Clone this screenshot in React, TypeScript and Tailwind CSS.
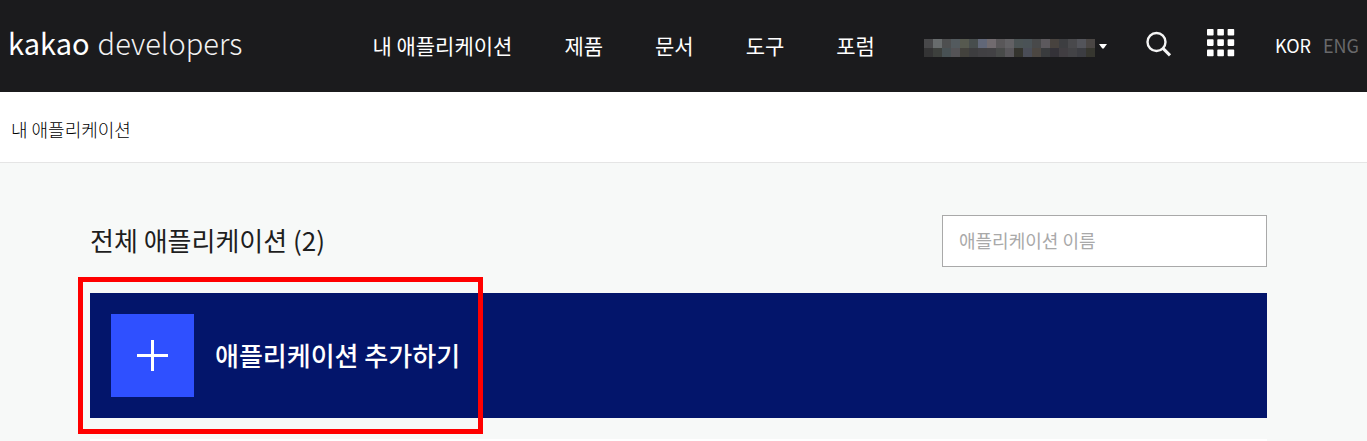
import clsx from 'clsx';

const NAV_ITEMS = ['내 애플리케이션', '제품', '문서', '도구', '포럼'];

// masked account name, two rows of blocks
const MASK_COLORS = [
  'bg-[#48484a]', 'bg-[#686c6d]', 'bg-[#4e4f50]', 'bg-[#535a5e]', 'bg-[#56594f]', 'bg-[#474d4d]', 'bg-[#616778]',
  'bg-[#716b6f]', 'bg-[#595759]', 'bg-[#626164]', 'bg-[#4b5354]', 'bg-[#4a5256]', 'bg-[#48494a]', 'bg-[#5c595d]',
  'bg-[#48433f]', 'bg-[#3d3e41]', 'bg-[#49494c]', 'bg-[#53545a]', 'bg-[#4a4644]',
  'bg-[#343435]', 'bg-[#3d403d]', 'bg-[#485154]', 'bg-[#545356]', 'bg-[#43423d]', 'bg-[#3d3d3f]', 'bg-[#414043]',
  'bg-[#424144]', 'bg-[#484a49]', 'bg-[#58565a]', 'bg-[#34342e]', 'bg-[#4a4d57]', 'bg-[#4c4742]', 'bg-[#393b3d]',
  'bg-[#343238]', 'bg-[#413e42]', 'bg-[#434346]', 'bg-[#3c3d42]', 'bg-[#36362f]',
];

function SearchIcon() {
  return (
    <svg width="26" height="26" viewBox="0 0 26 26" fill="none" stroke="#f5f5f5" strokeWidth="2.4" aria-hidden="true">
      <circle cx="10.5" cy="11" r="9" />
      <path d="M17 17.4L24 24.4" strokeWidth="3" />
    </svg>
  );
}

function GridIcon() {
  return (
    <svg width="28" height="28" viewBox="0 0 28 28" fill="#ffffff" aria-hidden="true">
      {[0, 10.3, 20.6].map((y) =>
        [0, 10.3, 20.6].map((x) => <rect key={`${x}-${y}`} x={x} y={y} width="6.6" height="6.6" rx="0.8" />)
      )}
    </svg>
  );
}

function Header() {
  return (
    <header className="flex h-[92px] items-center bg-[#1b1b1d] px-2 text-white">
      <a href="#" className="flex items-baseline gap-2 pb-2 text-[29px] leading-9">
        <span>kakao</span>
        <span className="font-light text-[#f2f2f2]">developers</span>
      </a>
      <nav className="ml-auto pb-0.5">
        <ul className="flex gap-[52px] text-[21px] leading-8 whitespace-nowrap">
          {NAV_ITEMS.map((item) => (
            <li key={item}>
              <a href="#">{item}</a>
            </li>
          ))}
        </ul>
      </nav>
      <button type="button" aria-label="계정" className="ml-[49px] flex items-center gap-1 pt-1">
        <span className="grid grid-cols-19">
          {MASK_COLORS.map((color, idx) => (
            <span key={idx} className={clsx('size-[9px]', color)} />
          ))}
        </span>
        <svg width="8" height="5" viewBox="0 0 8 5" fill="#ffffff" className="mb-1" aria-hidden="true">
          <path d="M0 0h8L4.7 4.6H3.3z" />
        </svg>
      </button>
      <button type="button" aria-label="검색" className="ml-[39px] pb-1">
        <SearchIcon />
      </button>
      <button type="button" aria-label="전체 메뉴" className="ml-[35px] pb-1.5">
        <GridIcon />
      </button>
      <div className="ml-10 flex gap-3 pb-0.5 text-lg">
        <button type="button">KOR</button>
        <button type="button" className="text-[#69696b]">ENG</button>
      </div>
    </header>
  );
}

export default function App() {
  return (
    <div className="flex min-h-screen flex-col bg-[#f7f9f8] font-['Noto_Sans_CJK_KR',sans-serif] text-[#1e1e1e]">
      <Header />
      <div className="flex h-[71px] items-center border-b border-[#e5e5e5] bg-white px-[11px] pt-1">
        <a href="#" className="text-lg font-light text-black">내 애플리케이션</a>
      </div>

      <main className="flex flex-1 flex-col pt-[52px] pr-[100px] pl-[90px]">
        <div className="flex items-center justify-between">
          <h1 className="pb-0.5 text-[26px] leading-10">전체 애플리케이션 (2)</h1>
          <input
            type="text"
            aria-label="애플리케이션 이름"
            placeholder="애플리케이션 이름"
            className="h-[52px] w-[325px] border border-[#a9a9a9] bg-white px-4 pb-0.5 text-lg placeholder:text-[#a9a9a9]"
          />
        </div>

        <div className="relative mt-[26px]">
          <button
            type="button"
            className="flex w-full items-center gap-[21px] bg-[#03156b] p-[21px] text-[26px] font-medium text-white"
          >
            <span className="flex size-[83px] items-center justify-center bg-[#2f50ff]">
              <svg width="31" height="31" viewBox="0 0 31 31" stroke="#ffffff" strokeWidth="3" aria-hidden="true">
                <path d="M15.5 0v31M0 15.5h31" />
              </svg>
            </span>
            <span className="pb-0.5">애플리케이션 추가하기</span>
          </button>
          <div className="pointer-events-none absolute -top-4 -left-3 h-[157px] w-[405px] border-5 border-[#ff0000]" />
        </div>

        <div className="mt-[21px] flex-1 bg-white" />
      </main>
    </div>
  );
}
